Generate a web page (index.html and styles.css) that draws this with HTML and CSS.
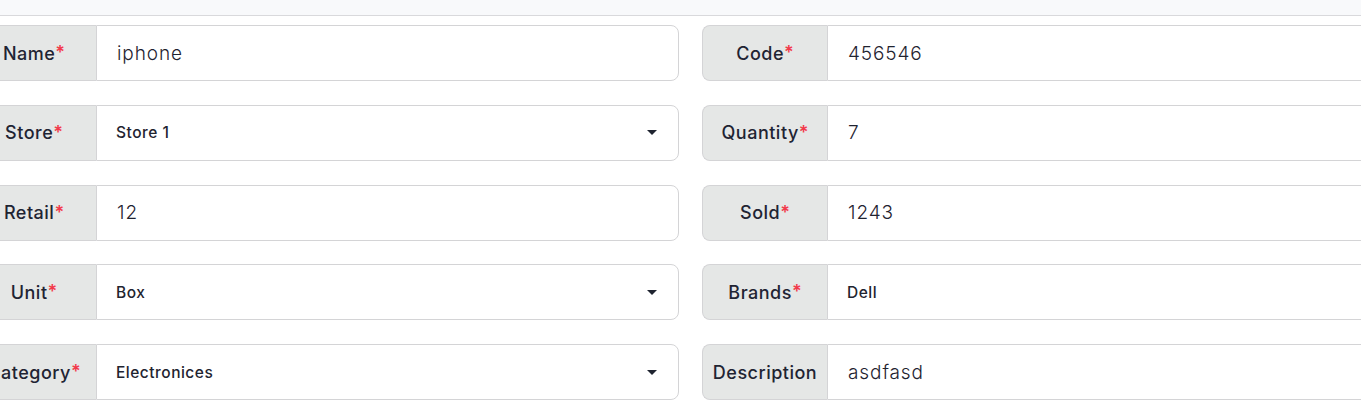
FILE: index.html
```html
<!DOCTYPE html>
<html lang="en">
<head>
<meta charset="utf-8">
<title>Product form</title>
<link rel="stylesheet" href="styles.css">
</head>
<body>
<div class="topbar"></div>
<form class="form">
  <div class="field">
    <label class="label">Name<span class="req">*</span></label>
    <div class="control"><span class="value">iphone</span></div>
  </div>
  <div class="field">
    <label class="label">Code<span class="req">*</span></label>
    <div class="control"><span class="value">456546</span></div>
  </div>
  <div class="field">
    <label class="label">Store<span class="req">*</span></label>
    <div class="control select"><span class="option">Store 1</span><svg class="caret" width="10" height="5" viewBox="0 0 10 5"><polygon points="0,0 10,0 5,5" fill="#1f2430"/></svg></div>
  </div>
  <div class="field">
    <label class="label">Quantity<span class="req">*</span></label>
    <div class="control"><span class="value">7</span></div>
  </div>
  <div class="field">
    <label class="label">Retail<span class="req">*</span></label>
    <div class="control"><span class="value">12</span></div>
  </div>
  <div class="field">
    <label class="label">Sold<span class="req">*</span></label>
    <div class="control"><span class="value">1243</span></div>
  </div>
  <div class="field">
    <label class="label">Unit<span class="req">*</span></label>
    <div class="control select"><span class="option">Box</span><svg class="caret" width="10" height="5" viewBox="0 0 10 5"><polygon points="0,0 10,0 5,5" fill="#1f2430"/></svg></div>
  </div>
  <div class="field">
    <label class="label">Brands<span class="req">*</span></label>
    <div class="control"><span class="option">Dell</span></div>
  </div>
  <div class="field">
    <label class="label">Category<span class="req">*</span></label>
    <div class="control select"><span class="option">Electronices</span><svg class="caret" width="10" height="5" viewBox="0 0 10 5"><polygon points="0,0 10,0 5,5" fill="#1f2430"/></svg></div>
  </div>
  <div class="field">
    <label class="label">Description</label>
    <div class="control"><span class="value">asdfasd</span></div>
  </div>
</form>
</body>
</html>
```
FILE: styles.css
```css
html, body {
  margin: 0;
  padding: 0;
  background: #ffffff;
  overflow: hidden;
}

body {
  font-family: "Inter", "Open Sans", sans-serif;
  color: #1f2430;
}

.topbar {
  height: 15px;
  background: #f8f9fb;
  border-bottom: 1px solid #d9d9dc;
}

.form {
  display: grid;
  grid-template-columns: 708px 708px;
  column-gap: 23px;
  row-gap: 23.75px;
  margin: 9px 0 0 -29px;
}

.field {
  display: flex;
  height: 56px;
}

.label {
  flex: none;
  width: 124px;
  display: flex;
  align-items: center;
  justify-content: center;
  background: #e5e7e6;
  border: 1px solid #d4d4d6;
  border-right: none;
  border-radius: 8px 0 0 8px;
  font-size: 18px;
  font-weight: 500;
  color: #1f2433;
  letter-spacing: 0.5px;
  white-space: nowrap;
}

.req {
  color: #f23a4b;
  font-size: 18px;
  font-weight: 600;
  letter-spacing: 0;
  align-self: flex-start;
  margin-top: 16px;
}

.control {
  flex: 1;
  display: flex;
  align-items: center;
  border: 1px solid #d4d4d6;
  border-radius: 0 8px 8px 0;
  padding: 0 20px;
  background: #ffffff;
}

.value {
  font-size: 19px;
  font-weight: 300;
  color: #1f2330;
  letter-spacing: 0.9px;
}

.option {
  font-size: 15.5px;
  font-weight: 500;
  color: #1f2430;
  letter-spacing: 0.5px;
  margin-left: -1px;
}

.select {
  justify-content: space-between;
  padding-right: 21px;
}

.caret {
  display: block;
}
```
